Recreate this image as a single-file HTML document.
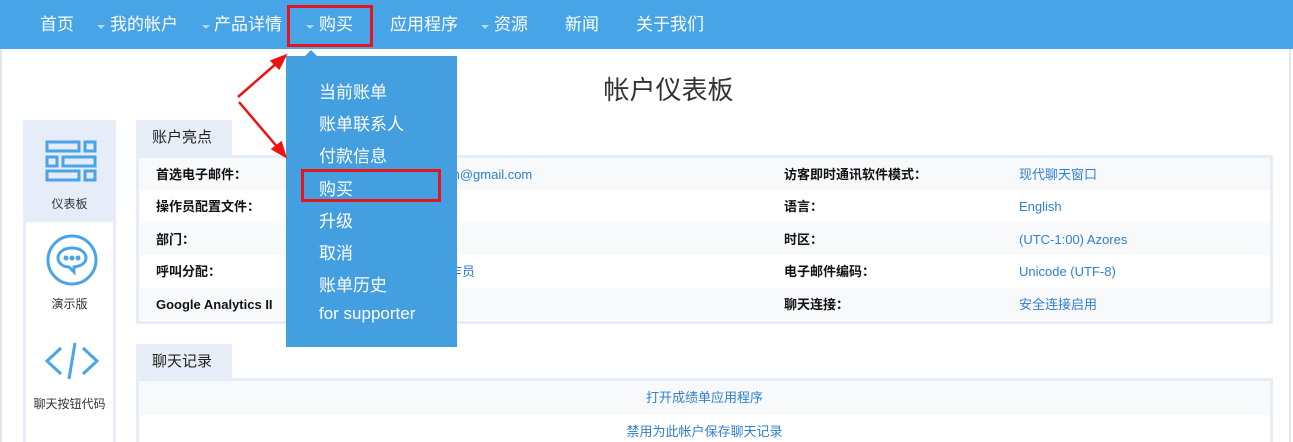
<!DOCTYPE html>
<html style="width:1293px;height:442px;overflow:hidden"><head><meta charset="utf-8"><style>
*{margin:0;padding:0;box-sizing:border-box}
body{width:1293px;height:442px;overflow:hidden;background:#fff;font-family:"Liberation Sans","Noto Sans CJK SC",sans-serif;position:relative}
.nav{position:absolute;left:0;top:0;width:1293px;height:49px;background:#46a4e7}
.nav span{position:absolute;top:14px;color:#fff;font-size:17px;line-height:22px}
.tri{position:absolute;top:25px;width:0;height:0;border-left:4px solid transparent;border-right:4px solid transparent;border-top:4px solid #b6d8f3}
.a{position:absolute}
.edge{position:absolute;top:49px;width:2px;height:393px;background:#e3e6ec}
.side{position:absolute;left:23px;top:120px;width:93px;height:330px;border:3px solid #e6ecf8;border-top:none;background:#fff}
.side .lbl{position:absolute;width:87px;text-align:center;font-size:12px;color:#333}
.tab{position:absolute;left:136px;width:96px;height:35px;background:#e8eef8;font-size:15px;color:#222;padding:6px 0 0 16px}
.box{position:absolute;left:136px;width:1137px;border:3px solid #e6ecf8;overflow:hidden}
.row{height:32.4px;position:relative;font-size:13px}
.row:nth-child(odd){background:#f8f9fb}
.row b,.row i{position:absolute;top:0;line-height:33px;white-space:nowrap}
.row b{left:17px;color:#111}
.row b.r{left:645px}
.row i{font-style:normal;color:#2f7fd0;left:880px}
.dd{position:absolute;left:286px;top:56px;width:171px;height:291px;background:#449fe0}
.dd div{position:absolute;left:33px;color:#fff;font-size:17px}
.crow{height:34px;font-size:13px;color:#2f7fd0;text-align:center;line-height:34px}
</style></head><body>
<div class="nav">
<span style="left:40px">首页</span>
<i class="tri" style="left:97px"></i><span style="left:110px">我的帐户</span>
<i class="tri" style="left:202px"></i><span style="left:214px">产品详情</span>
<i class="tri" style="left:306px"></i><span style="left:319px">购买</span>
<span style="left:390px">应用程序</span>
<i class="tri" style="left:481px"></i><span style="left:494px">资源</span>
<span style="left:565px">新闻</span>
<span style="left:636px">关于我们</span>
</div>
<div class="a" style="left:287px;top:5px;width:86px;height:42px;border:3px solid #e8141c"></div>
<div class="edge" style="left:0"></div><div class="edge" style="left:1289px"></div>
<div class="a" style="left:0;top:70px;width:1293px;text-align:center;font-size:26px;color:#333;padding-left:44px">帐户仪表板</div>

<div class="side">
<div class="a" style="left:-3px;top:0;width:93px;height:102px;background:#e6edf8"></div>
<svg class="a" style="left:19px;top:20px" width="52" height="42" viewBox="0 0 52 42" fill="none" stroke="#4ba3e8" stroke-width="3">
<rect x="2" y="2" width="32" height="9"/><rect x="40" y="2" width="10" height="9"/>
<rect x="2" y="17" width="10" height="9"/><rect x="18" y="17" width="32" height="9"/>
<rect x="2" y="31" width="32" height="9"/><rect x="40" y="31" width="10" height="9"/></svg>
<div class="lbl" style="top:75px">仪表板</div>
<svg class="a" style="left:20px;top:114px" width="52" height="52" viewBox="0 0 52 52" fill="none" stroke="#4ba3e8" stroke-width="3">
<circle cx="26" cy="26" r="24"/><path d="M26 14c-9 0-14 5-14 10 0 5 5 9 11 9l5 5v-5c7-1 12-4 12-9 0-5-5-10-14-10z"/>
<circle cx="20" cy="24" r="1" fill="#4ba3e8"/><circle cx="26" cy="24" r="1" fill="#4ba3e8"/><circle cx="32" cy="24" r="1" fill="#4ba3e8"/></svg>
<div class="lbl" style="top:175px">演示版</div>
<svg class="a" style="left:18px;top:222px" width="56" height="38" viewBox="0 0 56 38" fill="none" stroke="#4ba3e8" stroke-width="3">
<path d="M17 6L3 19l14 13M39 6l14 13-14 13M31 1L25 37"/></svg>
<div class="lbl" style="top:275px">聊天按钮代码</div>
</div>

<div class="tab" style="top:120px">账户亮点</div>
<div class="box" style="top:155px;height:169px">
<div class="row"><b>首选电子邮件：</b><i style="left:310px">m@gmail.com</i><b class="r">访客即时通讯软件模式：</b><i>现代聊天窗口</i></div>
<div class="row"><b>操作员配置文件：</b><b class="r">语言：</b><i>English</i></div>
<div class="row"><b>部门：</b><b class="r">时区：</b><i>(UTC-1:00) Azores</i></div>
<div class="row"><b>呼叫分配：</b><i style="left:310px">乍员</i><b class="r">电子邮件编码：</b><i>Unicode (UTF-8)</i></div>
<div class="row"><b>Google Analytics II</b><b class="r">聊天连接：</b><i>安全连接启用</i></div>
</div>
<div class="tab" style="top:344px">聊天记录</div>
<div class="box" style="top:378px;height:80px">
<div class="crow" style="background:#f8f9fb">打开成绩单应用程序</div>
<div class="crow">禁用为此帐户保存聊天记录</div>
</div>

<div class="a" style="left:305px;top:50px;width:0;height:0;border-left:6px solid transparent;border-right:6px solid transparent;border-bottom:6px solid #449fe0"></div>
<div class="dd">
<div style="top:22px">当前账单</div>
<div style="top:54px">账单联系人</div>
<div style="top:86px">付款信息</div>
<div style="top:119px">购买</div>
<div style="top:151px">升级</div>
<div style="top:183px">取消</div>
<div style="top:215px">账单历史</div>
<div style="top:248px">for supporter</div>
</div>
<div class="a" style="left:301px;top:169px;width:140px;height:33px;border:3px solid #e8141c"></div>
<svg class="a" style="left:0;top:0" width="400" height="200">
<g stroke="#f01010" stroke-width="2.5" fill="#f01010">
<line x1="238" y1="97" x2="278" y2="62"/><polygon points="285,56 272,61 279,68"/>
<line x1="239" y1="102" x2="279" y2="149"/><polygon points="285,156 273,149 281,143"/>
</g></svg>
</body></html>
